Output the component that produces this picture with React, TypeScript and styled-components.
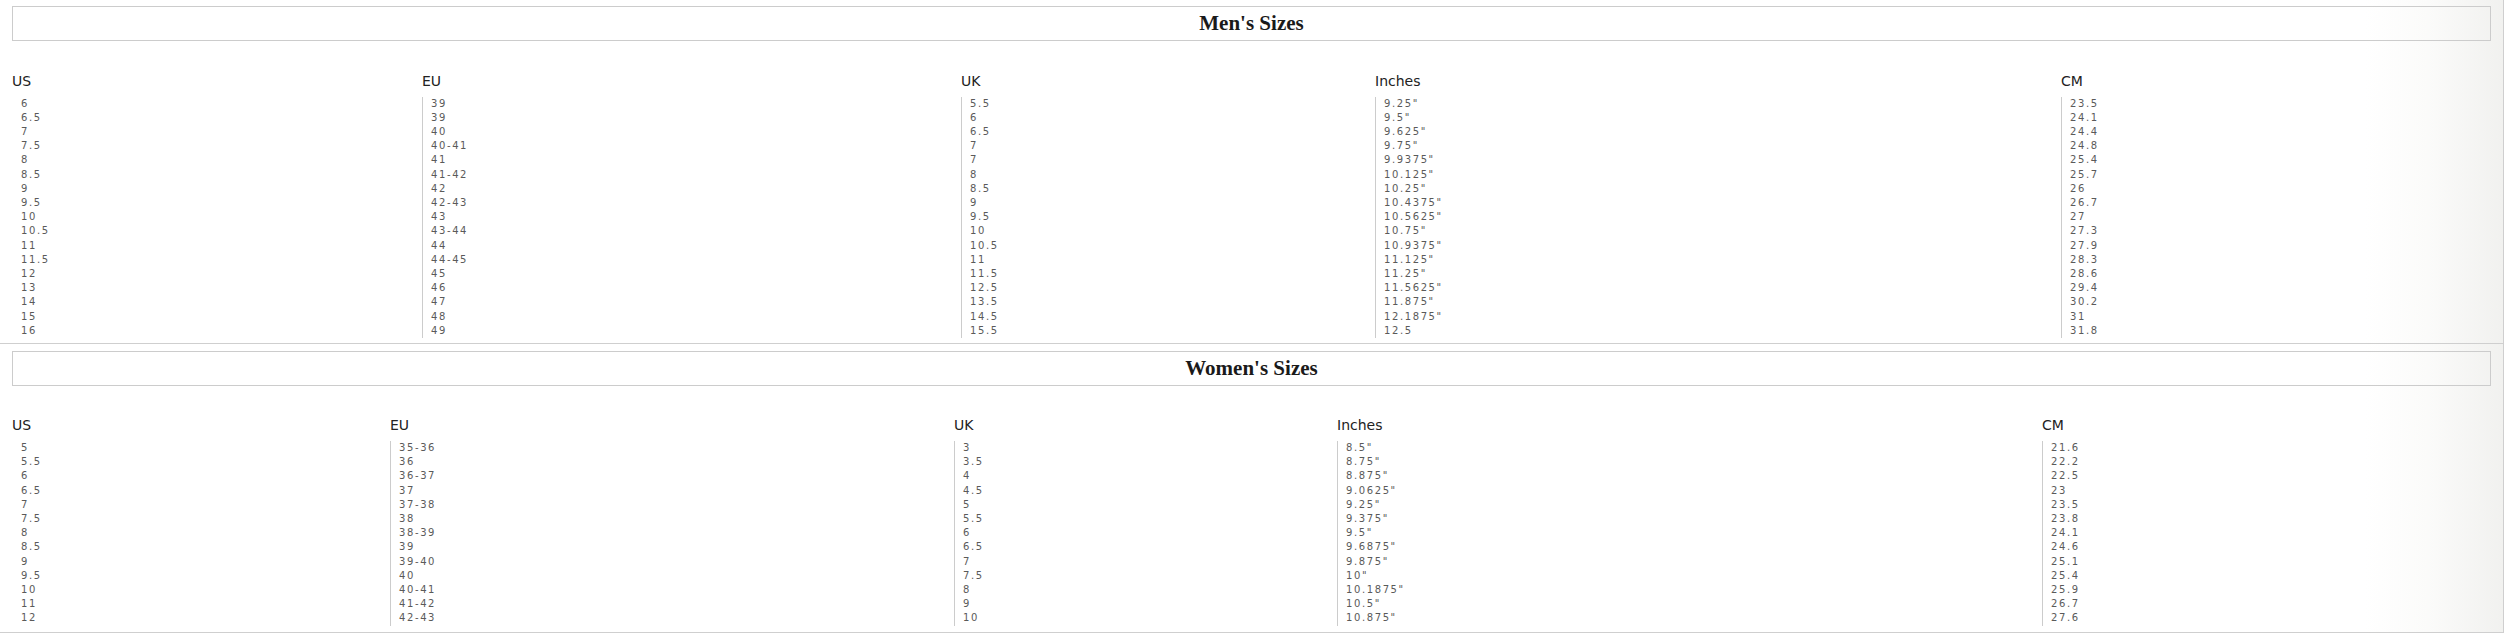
import React from 'react';
import styled, { createGlobalStyle } from 'styled-components';

const GlobalStyle = createGlobalStyle`
  html, body {
    margin: 0;
    padding: 0;
    background: #fff;
  }
`;

const Page = styled.div`
  width: 2504px;
  box-sizing: border-box;
  border-right: 1px solid #cfcfcf;
  background: linear-gradient(to right, #fff 0%, #fff 94.5%, #fbfbfa 97%, #f1f1ef 100%);
`;

const Section = styled.section<{ $top: number; $bottom: number }>`
  padding: ${p => p.$top}px 12px ${p => p.$bottom}px;
  border-bottom: 1px solid #cfcfcf;
`;

const TitleBox = styled.div`
  height: 35px;
  box-sizing: border-box;
  border: 1px solid #cccccc;
  display: flex;
  align-items: center;
  justify-content: center;
`;

const Title = styled.h2`
  margin: 0;
  font-family: 'Liberation Serif', 'Times New Roman', serif;
  font-weight: 700;
  font-size: 21px;
  color: #1a1a1a;
`;

const Table = styled.div<{ $cols: string; $gap: number }>`
  display: grid;
  grid-template-columns: ${p => p.$cols};
  margin-top: ${p => p.$gap}px;
`;

const Column = styled.div`
  display: flex;
  flex-direction: column;
`;

const Label = styled.div`
  font-family: 'DejaVu Sans', sans-serif;
  font-size: 14px;
  line-height: 17px;
  color: #222;
  margin-bottom: 6.5px;
`;

const Values = styled.ul<{ $first: boolean }>`
  list-style: none;
  margin: 0;
  padding: 0 0 0 8px;
  border-left: 1px solid ${p => (p.$first ? 'transparent' : '#cccccc')};
`;

const Value = styled.li`
  font-family: 'DejaVu Sans', sans-serif;
  font-size: 10px;
  line-height: 14.2px;
  letter-spacing: 1.6px;
  color: #5a5a5a;
`;

type Col = { label: string; values: string[] };

const menCols: Col[] = [
  { label: 'US', values: ['6', '6.5', '7', '7.5', '8', '8.5', '9', '9.5', '10', '10.5', '11', '11.5', '12', '13', '14', '15', '16'] },
  { label: 'EU', values: ['39', '39', '40', '40-41', '41', '41-42', '42', '42-43', '43', '43-44', '44', '44-45', '45', '46', '47', '48', '49'] },
  { label: 'UK', values: ['5.5', '6', '6.5', '7', '7', '8', '8.5', '9', '9.5', '10', '10.5', '11', '11.5', '12.5', '13.5', '14.5', '15.5'] },
  {
    label: 'Inches',
    values: ['9.25"', '9.5"', '9.625"', '9.75"', '9.9375"', '10.125"', '10.25"', '10.4375"', '10.5625"', '10.75"', '10.9375"', '11.125"', '11.25"', '11.5625"', '11.875"', '12.1875"', '12.5'],
  },
  { label: 'CM', values: ['23.5', '24.1', '24.4', '24.8', '25.4', '25.7', '26', '26.7', '27', '27.3', '27.9', '28.3', '28.6', '29.4', '30.2', '31', '31.8'] },
];

const womenCols: Col[] = [
  { label: 'US', values: ['5', '5.5', '6', '6.5', '7', '7.5', '8', '8.5', '9', '9.5', '10', '11', '12'] },
  { label: 'EU', values: ['35-36', '36', '36-37', '37', '37-38', '38', '38-39', '39', '39-40', '40', '40-41', '41-42', '42-43'] },
  { label: 'UK', values: ['3', '3.5', '4', '4.5', '5', '5.5', '6', '6.5', '7', '7.5', '8', '9', '10'] },
  {
    label: 'Inches',
    values: ['8.5"', '8.75"', '8.875"', '9.0625"', '9.25"', '9.375"', '9.5"', '9.6875"', '9.875"', '10"', '10.1875"', '10.5"', '10.875"'],
  },
  { label: 'CM', values: ['21.6', '22.2', '22.5', '23', '23.5', '23.8', '24.1', '24.6', '25.1', '25.4', '25.9', '26.7', '27.6'] },
];

const SizeTable: React.FC<{ cols: Col[]; template: string; gap: number }> = ({ cols, template, gap }) => (
  <Table $cols={template} $gap={gap}>
    {cols.map((c, i) => (
      <Column key={c.label}>
        <Label>{c.label}</Label>
        <Values $first={i === 0}>
          {c.values.map((v, j) => (
            <Value key={j}>{v}</Value>
          ))}
        </Values>
      </Column>
    ))}
  </Table>
);

const App: React.FC = () => {
  return (
    <>
      <GlobalStyle />
      <Page>
        <Section $top={6} $bottom={5.5}>
          <TitleBox>
            <Title>Men's Sizes</Title>
          </TitleBox>
          <SizeTable cols={menCols} template="410px 539px 414px 686px 1fr" gap={32} />
        </Section>
        <Section $top={7} $bottom={6.5}>
          <TitleBox>
            <Title>Women's Sizes</Title>
          </TitleBox>
          <SizeTable cols={womenCols} template="378px 564px 383px 705px 1fr" gap={31} />
        </Section>
      </Page>
    </>
  );
};

export default App;
